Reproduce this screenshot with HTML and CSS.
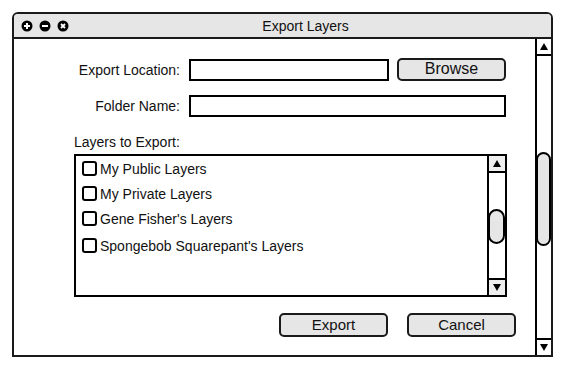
FILE: index.html
```html
<!DOCTYPE html>
<html>
<head>
<meta charset="utf-8">
<title>Export Layers</title>
<link rel="stylesheet" href="styles.css">
</head>
<body>
<div class="window">
  <div class="titlebar">
    <div class="controls">
      <svg class="ctl" width="12" height="12" viewBox="0 0 12 12"><circle cx="6" cy="6" r="5.5" fill="#000"/><path d="M6 3v6M3 6h6" stroke="#fff" stroke-width="2"/></svg>
      <svg class="ctl" width="12" height="12" viewBox="0 0 12 12"><circle cx="6" cy="6" r="5.5" fill="#000"/><path d="M3 6h6" stroke="#fff" stroke-width="2"/></svg>
      <svg class="ctl" width="12" height="12" viewBox="0 0 12 12"><circle cx="6" cy="6" r="5.5" fill="#000"/><path d="M4 4l4 4M8 4l-4 4" stroke="#fff" stroke-width="1.8"/></svg>
    </div>
    <div class="title">Export Layers</div>
  </div>
  <div class="main">
    <div class="content">
      <div class="row">
        <div class="label">Export Location:</div>
        <div class="input short"></div>
        <div class="btn browse">Browse</div>
      </div>
      <div class="row row2">
        <div class="label">Folder Name:</div>
        <div class="input long"></div>
      </div>
      <div class="section">Layers to Export:</div>
      <div class="listbox">
        <div class="items">
          <div class="item"><span class="check"></span>My Public Layers</div>
          <div class="item"><span class="check"></span>My Private Layers</div>
          <div class="item"><span class="check"></span>Gene Fisher's Layers</div>
          <div class="item"><span class="check"></span>Spongebob Squarepant's Layers</div>
        </div>
        <div class="vscroll small">
          <div class="arrow up"><svg width="8" height="7" viewBox="0 0 8 7"><path d="M4 0L8 7H0z" fill="#000"/></svg></div>
          <div class="track"><div class="thumb"></div></div>
          <div class="arrow down"><svg width="8" height="7" viewBox="0 0 8 7"><path d="M0 0H8L4 7z" fill="#000"/></svg></div>
        </div>
      </div>
      <div class="actions">
        <div class="btn">Export</div>
        <div class="btn">Cancel</div>
      </div>
    </div>
    <div class="vscroll big">
      <div class="arrow up"><svg width="8" height="7" viewBox="0 0 8 7"><path d="M4 0L8 7H0z" fill="#000"/></svg></div>
      <div class="track"><div class="thumb"></div></div>
      <div class="arrow down"><svg width="8" height="7" viewBox="0 0 8 7"><path d="M0 0H8L4 7z" fill="#000"/></svg></div>
    </div>
  </div>
</div>
</body>
</html>
```
FILE: styles.css
```css
* { box-sizing: border-box; }
html, body { margin: 0; padding: 0; background: #fff; }
body {
  font-family: "Liberation Sans", Arial, sans-serif;
  font-size: 14px;
  color: #111;
}
.window {
  margin: 12px 0 0 12px;
  width: 541px;
  height: 345px;
  border: 2px solid #1a1a1a;
  border-radius: 6px 6px 0 0;
  display: flex;
  flex-direction: column;
  overflow: hidden;
}
.titlebar {
  height: 25px;
  flex: none;
  background: #e6e6e6;
  border-bottom: 2px solid #1a1a1a;
  display: flex;
  align-items: center;
}
.controls {
  display: flex;
  gap: 6px;
  padding-left: 7px;
  width: 100px;
}
.ctl { display: block; }
.title {
  flex: 1;
  text-align: center;
  font-size: 14px;
  padding-right: 54px;
}
.main {
  flex: 1;
  display: flex;
  min-height: 0;
}
.content {
  flex: 1;
  padding: 19px 19px 0 60px;
  display: flex;
  flex-direction: column;
}
.row {
  display: flex;
  align-items: center;
  height: 23px;
}
.row2 { margin-top: 14px; height: 22px; }
.label {
  width: 106px;
  text-align: right;
}
.input {
  margin-left: 9px;
  height: 22px;
  border: 2px solid #000;
  background: #fff;
}
.input.short { width: 200px; }
.input.long { width: 317px; }
.btn {
  width: 109px;
  height: 24px;
  border: 2px solid #1a1a1a;
  border-radius: 5px;
  background: #e6e6e6;
  font-size: 15px;
  display: flex;
  align-items: center;
  justify-content: center;
  padding-bottom: 1px;
}
.browse { margin-left: 8px; height: 23px; font-size: 16px; }
.section {
  margin-top: 17px;
  line-height: 16px;
}
.listbox {
  margin-top: 4px;
  width: 433px;
  height: 143px;
  border: 2px solid #000;
  display: flex;
}
.items { flex: 1; padding-left: 6px; }
.item {
  height: 25px;
  display: flex;
  align-items: center;
}
.item:last-child { height: 27px; padding-top: 2px; }
.check {
  width: 15px;
  height: 15px;
  border: 2px solid #000;
  border-radius: 3px;
  margin-right: 3px;
  flex: none;
}
.vscroll {
  display: flex;
  flex-direction: column;
  border-left: 2px solid #000;
  flex: none;
}
.vscroll.small { width: 18px; }
.vscroll.big { width: 16px; }
.arrow {
  display: flex;
  align-items: center;
  justify-content: center;
  flex: none;
}
.arrow svg { display: block; }
.arrow.up { border-bottom: 2px solid #000; }
.arrow.down { border-top: 2px solid #000; }
.small .arrow { height: 17px; background: #eee; }
.big .arrow { height: 17px; }
.track { flex: 1; display: flex; flex-direction: column; }
.thumb {
  background: #e6e6e6;
  border: 2px solid #000;
  border-radius: 9px;
}
.small .thumb { margin-top: 36px; height: 35px; margin-left: -1px; }
.big .thumb { margin-top: 96px; height: 94px; margin-left: -1px; }
.actions {
  margin-top: 16px;
  display: flex;
  justify-content: flex-end;
  gap: 19px;
}
```
